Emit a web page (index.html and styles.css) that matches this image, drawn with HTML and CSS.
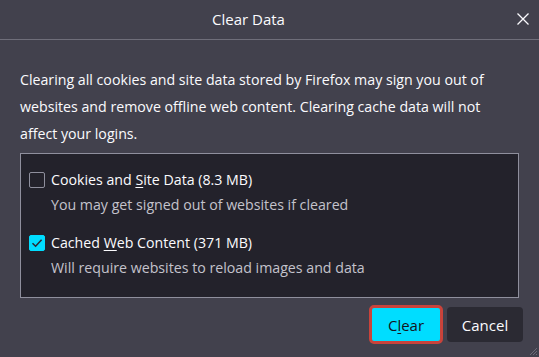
FILE: index.html
```html
<!DOCTYPE html>
<html lang="en">
<head>
<meta charset="utf-8">
<title>Clear Data</title>
<link rel="stylesheet" href="styles.css">
</head>
<body>
<div class="dialog">
  <header class="titlebar">
    <h1 class="title">Clear Data</h1>
    <button class="close" aria-label="Close">
      <svg width="12" height="12" viewBox="0 0 12 12"><path d="M0.5 0.5L11.5 11.5M11.5 0.5L0.5 11.5" stroke="#fbfbfe" stroke-width="1.3" fill="none"/></svg>
    </button>
  </header>
  <main class="content">
    <p class="intro">Clearing all cookies and site data stored by Firefox may sign you out of websites and remove offline web content. Clearing cache data will not affect your logins.</p>
    <div class="options">
      <div class="option">
        <div class="option-row">
          <span class="checkbox"></span>
          <span class="label">Cookies and <u>S</u>ite Data (8.3 MB)</span>
        </div>
        <div class="desc">You may get signed out of websites if cleared</div>
      </div>
      <div class="option">
        <div class="option-row">
          <span class="checkbox checked">
            <svg width="16" height="16" viewBox="0 0 16 16"><path d="M3.5 8.2L6.6 11.2L12.6 4.8" stroke="#2b2a33" stroke-width="1.6" fill="none"/></svg>
          </span>
          <span class="label">Cached <u>W</u>eb Content (371 MB)</span>
        </div>
        <div class="desc">Will require websites to reload images and data</div>
      </div>
    </div>
    <div class="actions">
      <button class="btn btn-primary">C<u>l</u>ear</button>
      <button class="btn btn-secondary">Cancel</button>
    </div>
  </main>
  <svg class="grip" width="9" height="9" viewBox="0 0 9 9"><path d="M8 1L1 8M8 4L4 8M8 7L7 8" stroke="#6c6b78" stroke-width="1"/></svg>
</div>
</body>
</html>
```

FILE: styles.css
```css
* { box-sizing: border-box; }
html, body {
  margin: 0;
  padding: 0;
  background: #42414d;
}
body {
  font-family: "Open Sans", "Noto Sans", sans-serif;
  color: #fbfbfe;
  width: 539px;
  height: 357px;
  overflow: hidden;
}
.dialog {
  position: relative;
  width: 539px;
  height: 357px;
}
.titlebar {
  position: relative;
  height: 40px;
  border-bottom: 1px solid #6f6e7a;
  display: flex;
  align-items: center;
  justify-content: center;
  padding-right: 42px;
}
.title {
  margin: 0;
  font-size: 15px;
  font-weight: 400;
  line-height: 20px;
  margin-top: -1px;
}
.close {
  position: absolute;
  right: 10px;
  top: 13px;
  width: 12px;
  height: 12px;
  padding: 0;
  border: 0;
  background: none;
  display: block;
}
.close svg { display: block; }
.content {
  padding: 0 16px 0 20px;
}
.intro {
  margin: 26px 0 0 0;
  font-size: 14.2px;
  line-height: 27px;
  width: 490px;
}
.options {
  margin-top: 6px;
  margin-right: 4px;
  height: 145px;
  border: 1px solid #8f8f9d;
  background: #23222b;
  padding: 17px 0 0 8px;
}
.option { margin-bottom: 19px; }
.option-row {
  display: flex;
  align-items: center;
  height: 18px;
}
.checkbox {
  width: 16px;
  height: 16px;
  border: 1px solid #8f8f9d;
  border-radius: 2px;
  flex: none;
  margin-right: 6px;
  display: block;
}
.checkbox.checked {
  background: #00ddff;
  border-color: #00ddff;
  position: relative;
}
.checkbox.checked svg {
  position: absolute;
  left: -1px;
  top: -1px;
}
.label {
  font-size: 14.2px;
  line-height: 18px;
}
.label u, .btn u { text-decoration-thickness: 1px; text-underline-offset: 2px; }
.desc {
  margin-top: 6px;
  padding-left: 22px;
  font-size: 14.2px;
  line-height: 20px;
  color: #c4c3cc;
}
.actions {
  display: flex;
  justify-content: flex-end;
  gap: 6px;
  margin-top: 9px;
}
.btn {
  font-family: inherit;
  font-size: 15px;
  height: 35px;
  border: 0;
  border-radius: 4px;
  padding: 0;
  display: flex;
  align-items: center;
  justify-content: center;
}
.btn-primary {
  width: 70px;
  background: #00ddff;
  color: #15141a;
  outline: 3px solid #c9433b;
  outline-offset: -1px;
  border-radius: 3px;
}
.btn-secondary {
  width: 76px;
  background: #2b2a33;
  color: #fbfbfe;
}
.grip {
  position: absolute;
  right: 1px;
  bottom: 1px;
}
```
